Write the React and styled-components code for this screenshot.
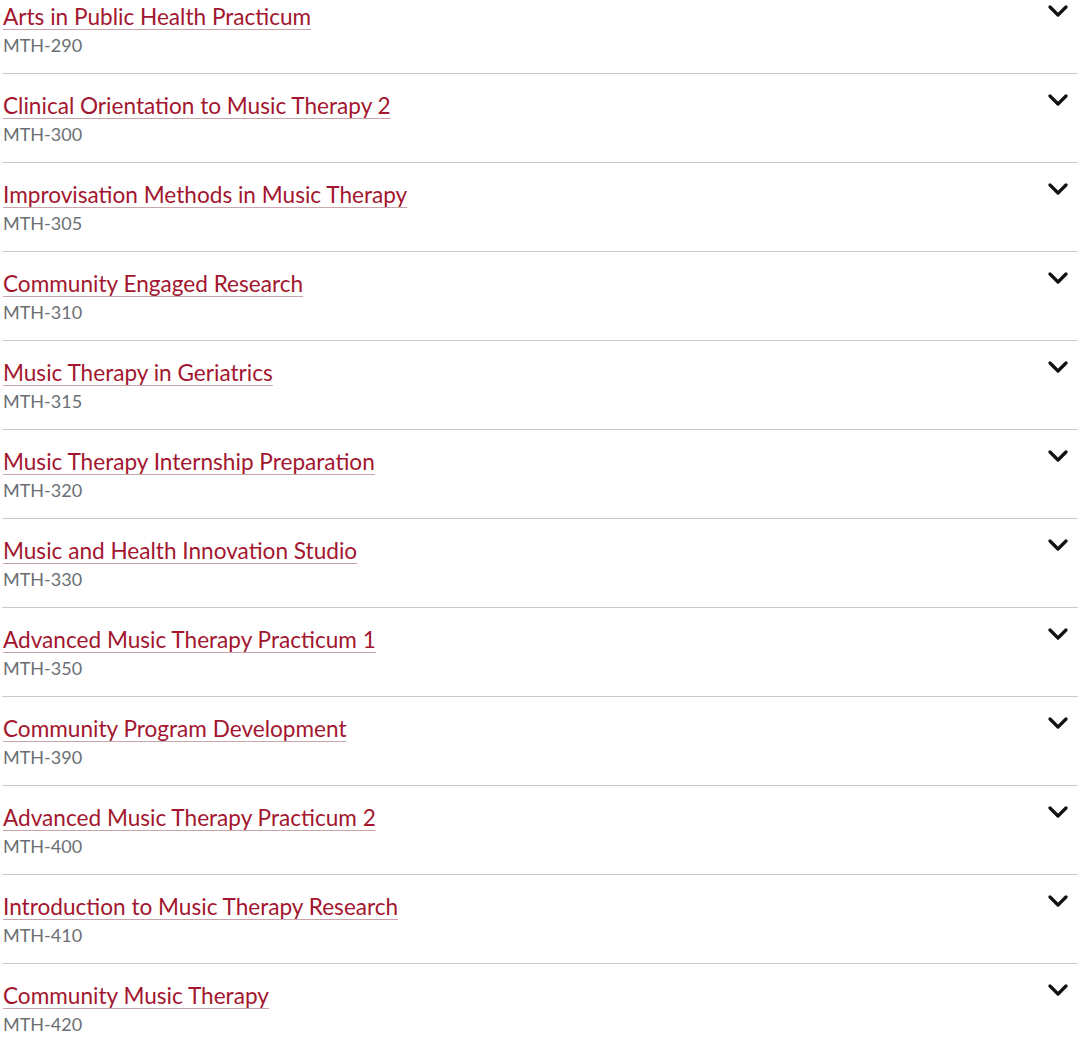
import React from 'react'
import styled, { createGlobalStyle } from 'styled-components'

const courses = [
  ['Arts in Public Health Practicum', 'MTH-290'],
  ['Clinical Orientation to Music Therapy 2', 'MTH-300'],
  ['Improvisation Methods in Music Therapy', 'MTH-305'],
  ['Community Engaged Research', 'MTH-310'],
  ['Music Therapy in Geriatrics', 'MTH-315'],
  ['Music Therapy Internship Preparation', 'MTH-320'],
  ['Music and Health Innovation Studio', 'MTH-330'],
  ['Advanced Music Therapy Practicum 1', 'MTH-350'],
  ['Community Program Development', 'MTH-390'],
  ['Advanced Music Therapy Practicum 2', 'MTH-400'],
  ['Introduction to Music Therapy Research', 'MTH-410'],
  ['Community Music Therapy', 'MTH-420'],
]

const Global = createGlobalStyle`
  body {
    margin: 0;
    background: #fff;
    font-family: Lato, "Open Sans", sans-serif;
    overflow: hidden;
  }
`

const List = styled.ul`
  list-style: none;
  margin: -15px 2px 0;
  padding: 0;
`

const Item = styled.li`
  display: flex;
  justify-content: space-between;
  align-items: flex-start;
  padding: 15px 10px 15px 1px;
  border-bottom: 1px solid #c9c9c9;
`

const Info = styled.div`
  display: flex;
  flex-direction: column;
`

const Title = styled.a`
  font-size: 22.6px;
  line-height: 33px;
  color: #a3162f;
  text-decoration: underline;
  text-decoration-color: #c7a6ab;
  text-decoration-thickness: 1px;
  text-underline-offset: 4px;
  cursor: pointer;
`

const Code = styled.span`
  font-size: 18px;
  line-height: 25px;
  color: #6b6f73;
`

const Toggle = styled.button`
  border: none;
  background: none;
  padding: 0;
  margin-top: 4px;
  width: 20px;
  height: 14px;
  display: flex;
  align-items: center;
  justify-content: center;
  cursor: pointer;
`

const Chevron = () => (
  <svg width="20" height="14" viewBox="0 0 20 14" fill="none">
    <path d="M2 3l8 8 8-8" stroke="#111" strokeWidth="3.2" strokeLinecap="round" strokeLinejoin="round" />
  </svg>
)

export default function App() {
  return (
    <>
      <Global />
      <List>
        {courses.map(([title, code]) => (
          <Item key={code}>
            <Info>
              <Title>{title}</Title>
              <Code>{code}</Code>
            </Info>
            <Toggle aria-label="expand">
              <Chevron />
            </Toggle>
          </Item>
        ))}
      </List>
    </>
  )
}
